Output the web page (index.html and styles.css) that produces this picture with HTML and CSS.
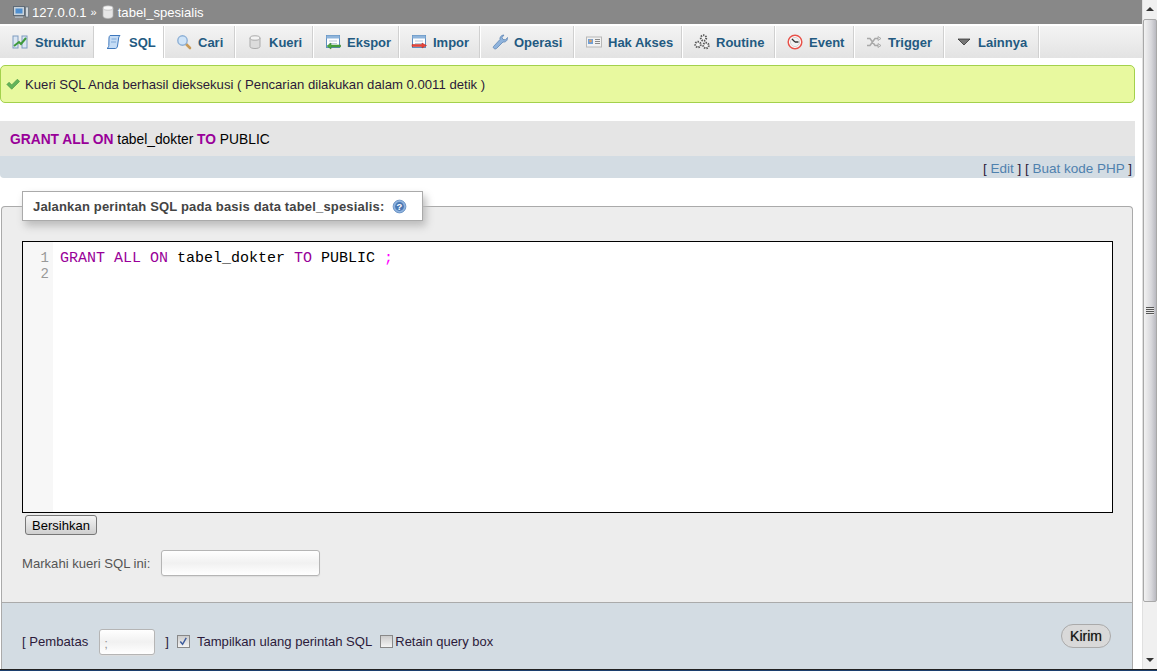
FILE: index.html
```html
<!DOCTYPE html>
<html lang="id">
<head>
<meta charset="utf-8">
<title>tabel_spesialis</title>
<link rel="stylesheet" href="styles.css">
</head>
<body>
<div class="window">
<main class="page">
  <div class="crumbs">
    <svg class="ico16" viewBox="0 0 16 16"><rect x=".5" y="2.500" width="11" height="9" fill="#c9d2da" stroke="#5f6b77"/><rect x="2.500" y="4.500" width="7" height="5" fill="#4f8fd0"/><rect x="2" y="12.500" width="8" height="1.500" fill="#aab4bd"/><rect x="12.500" y="3" width="3" height="10" fill="#cfd5da" stroke="#5f6b77" stroke-width=".7"/></svg>
    <span class="crumb">127.0.0.1</span>
    <span class="crumb-sep">»</span>
    <svg class="ico-db" viewBox="0 0 12 14"><path d="M1 3v8c0 1.500 2.200 2.500 5 2.500s5-1 5-2.500V3z" fill="#e6e6e6" stroke="#b5b5b5" stroke-width=".7"/><ellipse cx="6" cy="3" rx="5" ry="2.200" fill="#f7f7f7" stroke="#b5b5b5" stroke-width=".7"/></svg>
    <span class="crumb">tabel_spesialis</span>
  </div>
  <nav class="tabs">
    <a class="tab"><svg class="ico16" viewBox="0 0 16 16"><rect x="1" y="2" width="5" height="12" fill="#dbe6f3" stroke="#7e9cc0"/><rect x="10" y="2" width="5" height="12" fill="#dbe6f3" stroke="#7e9cc0"/><path d="M2 12l5-4 2 2 5-6" fill="none" stroke="#3e9a3a" stroke-width="2"/></svg>Struktur</a>
    <a class="tab tab-on"><svg class="ico16" viewBox="0 0 16 16"><path d="M4 1.500h10c-1 1-1.500 2-1.500 3.500l-1 7c-.3 1.500-1 2.500-2 2.500H1c1-.7 1.600-1.500 1.800-3L3 4c.1-1.300.4-2 1-2.500z" fill="#c5dcf5" stroke="#3f78bd"/><path d="M5.500 5h5M5 8h5" stroke="#7fa8d8"/></svg>SQL</a>
    <a class="tab"><svg class="ico16" viewBox="0 0 16 16"><path d="M9.500 9.500l4.500 4.500" stroke="#c89a58" stroke-width="2.600" stroke-linecap="round"/><circle cx="6.500" cy="6.500" r="4.700" fill="#cfe4f8" stroke="#8db0d6" stroke-width="1.400"/></svg>Cari</a>
    <a class="tab"><svg class="ico16" viewBox="0 0 16 16"><path d="M3 4v8.500c0 1.200 2.200 2 5 2s5-.8 5-2V4z" fill="#dcdcdc" stroke="#ababab"/><ellipse cx="8" cy="4" rx="5" ry="2.200" fill="#f4f4f4" stroke="#ababab"/></svg>Kueri</a>
    <a class="tab"><svg class="ico16" viewBox="0 0 16 16"><rect x="1.500" y="1.500" width="13" height="12" fill="#fff" stroke="#5f8fbf"/><rect x="1.500" y="1.500" width="13" height="3" fill="#8fb5dc"/><path d="M4 7h8M4 9.500h8" stroke="#b9c9da"/><path d="M15.500 11H6V9l-4 3 4 3v-2h9.500z" fill="#4aa83f" stroke="#2f7a2a" stroke-width=".5"/></svg>Ekspor</a>
    <a class="tab"><svg class="ico16" viewBox="0 0 16 16"><rect x="1.500" y="1.500" width="13" height="12" fill="#fff" stroke="#5f8fbf"/><rect x="1.500" y="1.500" width="13" height="3" fill="#8fb5dc"/><path d="M4 7h8M4 9.500h8" stroke="#b9c9da"/><path d="M1 10.500h10V9l4.500 2.500L11 14v-1.500H1z" fill="#e8443a" stroke="#b5261f" stroke-width=".5"/></svg>Impor</a>
    <a class="tab"><svg class="ico16" viewBox="0 0 16 16"><path d="M1.500 12.500L8 5.500c-.5-2 1-4.500 4-4.500l-2 2.500 1 2 2.500.3L15.500 3.500c.3 3-2 5-4.500 4.500L4.500 14.500c-1.500 1.200-4-.5-3-2z" fill="#8fb3dc" stroke="#5f86b5" stroke-width=".8"/></svg>Operasi</a>
    <a class="tab"><svg class="ico16" viewBox="0 0 16 16"><rect x=".5" y="3" width="15" height="10" fill="#f2f2f2" stroke="#b8b8b8"/><rect x="2" y="5" width="5" height="5" fill="#6fa0d8"/><circle cx="4.500" cy="7" r="1.400" fill="#e0a060"/><path d="M9 5.500h5M9 7.500h5M9 9.500h5" stroke="#8a8a8a"/></svg>Hak Akses</a>
    <a class="tab"><svg class="ico16" viewBox="0 0 16 16"><g fill="none" stroke="#555"><circle cx="9.500" cy="4" r="2.600" stroke-width="2.200" stroke-dasharray="1.300 1"/><circle cx="4" cy="10.500" r="2.600" stroke-width="2.200" stroke-dasharray="1.300 1"/><circle cx="12" cy="11.500" r="2.600" stroke-width="2.200" stroke-dasharray="1.300 1"/></g><g fill="#f4f4f4"><circle cx="9.500" cy="4" r="1.800"/><circle cx="4" cy="10.500" r="1.800"/><circle cx="12" cy="11.500" r="1.800"/></g></svg>Routine</a>
    <a class="tab"><svg class="ico16" viewBox="0 0 16 16"><circle cx="8" cy="8" r="6.800" fill="#fff" stroke="#e8524a" stroke-width="1.500"/><circle cx="8" cy="8" r="4.600" fill="#f2f2f2" stroke="#bbb" stroke-width=".6"/><path d="M8 8L5 5M8 8h3.500" stroke="#333" stroke-width="1.300"/></svg>Event</a>
    <a class="tab"><svg class="ico16" viewBox="0 0 16 16"><path d="M1 4.500h3l5 7h3M1 11.500h3l5-7h3" fill="none" stroke="#a8a8a8" stroke-width="1.500"/><path d="M12 2.500l3 2-3 2zM12 9.500l3 2-3 2z" fill="#e4e4e4" stroke="#999" stroke-width=".7"/></svg>Trigger</a>
    <a class="tab"><svg class="ico16" viewBox="0 0 16 16"><path d="M2 5h12L8 11z" fill="#777" stroke="#222" stroke-width=".7"/></svg>Lainnya</a>
  </nav>

  <div class="success"><svg class="check" viewBox="0 0 16 16"><path d="M1 8.500l2.500-2.500 3 3L13 2.500 15.500 5l-9 9z" fill="#63b35a" stroke="#3f8f3a" stroke-width=".7"/></svg>Kueri SQL Anda berhasil dieksekusi ( Pencarian dilakukan dalam 0.0011 detik )</div>

  <section class="result">
    <div class="result-sql"><b class="kw">GRANT ALL ON</b> tabel_dokter <b class="kw">TO</b> PUBLIC</div>
    <div class="result-links">[ <a>Edit</a> ] [ <a>Buat kode PHP</a> ]</div>
  </section>

  <form class="panel">
    <div class="legend">Jalankan perintah SQL pada basis data tabel_spesialis:<svg class="help" viewBox="0 0 16 16"><circle cx="8" cy="8" r="6.800" fill="#8fb3de" stroke="#6a92c4"/><circle cx="8" cy="8" r="4.700" fill="#4a78b4"/><text x="8" y="11.300" class="help-q">?</text></svg></div>
    <div class="panel-body">
      <div class="editor">
        <div class="gutter"><div>1</div><div>2</div></div>
        <div class="code"><span class="kw2">GRANT ALL ON</span> tabel_dokter <span class="kw2">TO</span> PUBLIC <span class="semi">;</span></div>
      </div>
      <button type="button" class="clear">Bersihkan</button>
      <label class="bookmark">Markahi kueri SQL ini:<span class="field field-wide"></span></label>
    </div>
    <div class="panel-foot">
      <span class="opt">[ Pembatas</span>
      <span class="field field-delim">;</span>
      <span class="opt">]</span>
      <span class="box box-on"><svg viewBox="0 0 12 12"><path d="M2.500 6l2.500 3 4-7" fill="none" stroke="#3d5c9c" stroke-width="1.600"/></svg></span>
      <span class="opt opt-show">Tampilkan ulang perintah SQL</span>
      <span class="box box-off"></span>
      <span class="opt opt-retain">Retain query box</span>
      <button type="button" class="send">Kirim</button>
    </div>
  </form>
</main>
<aside class="scrollbar">
  <div class="arrow arrow-up"></div>
  <div class="thumb"><div class="grip"></div></div>
  <div class="arrow arrow-down"></div>
</aside>
</div>
<div class="taskbar"></div>
</body>
</html>
```
FILE: styles.css
```css
* { box-sizing: border-box; }
html, body { height: 100%; margin: 0; overflow: hidden; }
body {
  display: flex;
  flex-direction: column;
  background: #fff;
  color: #2b1a3a;
  font-family: "Liberation Sans", Arial, sans-serif;
  font-size: 13.1px;
}
.window { display: flex; height: 669px; overflow: hidden; }
.page { width: 1142px; flex: none; overflow: hidden; }
.taskbar { height: 2px; background: #1c3f6e; border-top: 1px solid #222; }

.crumbs {
  display: flex;
  align-items: center;
  height: 24px;
  padding-left: 13px;
  background: #888;
  color: #fff;
}
.crumbs .ico16 { margin-right: 3px; }
.crumb-sep { margin: 0 5px 0 4px; font-size: 11px; }
.ico-db { width: 12px; height: 14px; margin-right: 4px; }

.tabs {
  display: grid;
  grid-template-columns: 94px 70px 71px 78px 86px 81px 94px 108px 93px 79px 90px 95px;
  height: 33px;
  margin-top: 1px;
  border-top: 1px solid #fff;
  background: linear-gradient(#f4f4f4, #e3e3e3);
}
.tab {
  display: flex;
  align-items: center;
  gap: 6px;
  padding-left: 12px;
  border-right: 1px solid #d0d0d0;
  box-shadow: 1px 0 0 #fff;
  color: #235a81;
  font-size: 13px;
  font-weight: bold;
  white-space: nowrap;
}
.tab:nth-child(-n+2) { gap: 7px; }
.tab-on { background: #fff; }
.ico16 { width: 16px; height: 16px; flex: none; }

.success {
  display: flex;
  align-items: center;
  height: 38px;
  margin: 7px 7px 0 0;
  padding-left: 5px;
  background: #e8f99f;
  border: 1px solid #a3d14c;
  border-radius: 5px;
  font-size: 13.15px;
}
.check { width: 14px; height: 14px; margin-right: 5px; }

.result { margin: 18px 7px 0 0; }
.result-sql {
  height: 35px;
  padding-left: 10px;
  background: #e5e5e5;
  color: #000;
  font-size: 13.8px;
  line-height: 37px;
}
.kw { color: #909; }
.result-links {
  height: 22px;
  padding-right: 3px;
  background: #d3dce3;
  border-radius: 0 0 4px 4px;
  font-size: 13.5px;
  line-height: 26px;
  text-align: right;
}
.result-links a { color: #4f81ae; }

.panel {
  position: relative;
  height: 470px;
  margin: 28px 9px 0 1px;
  background: #ededed;
  border: 1px solid #aaa;
  border-bottom: 0;
  border-radius: 4px 4px 0 0;
}
.legend {
  position: absolute;
  top: -16px;
  left: 20px;
  display: flex;
  align-items: center;
  width: 401px;
  height: 30px;
  padding-left: 10px;
  background: #fff;
  border: 1px solid #aaa;
  box-shadow: 3px 5px 8px #bbb;
  color: #444;
  font-size: 13px;
  font-weight: bold;
  letter-spacing: .17px;
}
.help { width: 15px; height: 15px; margin-left: 8px; }
.help-q { fill: #fff; font-size: 10px; font-weight: bold; text-anchor: middle; }

.panel-body { height: 395px; padding: 34px 19px 0 20px; }
.editor {
  display: flex;
  height: 272px;
  background: #fff;
  border: 1px solid #000;
}
.gutter {
  width: 30px;
  padding: 8px 4px 0 0;
  background: #f7f7f7;
  color: #999;
  font: 14px/16px "Liberation Mono", monospace;
  text-align: right;
}
.code {
  padding: 9px 0 0 7px;
  color: #000;
  font: 15px/16px "Liberation Mono", monospace;
}
.kw2 { color: #909; }
.semi { color: #f0f; }

.clear {
  display: block;
  width: 72px;
  height: 20px;
  margin: 2px 0 0 3px;
  padding: 0;
  background: linear-gradient(#f4f4f4, #cfcfcf);
  border: 1px solid #777;
  border-radius: 3px;
  color: #000;
  font: 13px "Liberation Sans", sans-serif;
}
.bookmark {
  display: flex;
  align-items: center;
  gap: 11px;
  margin-top: 15px;
  color: #555;
}
.field {
  display: block;
  height: 26px;
  background: linear-gradient(#fff, #f1f1f1 50%, #fff);
  border: 1px solid #b5b5b5;
  border-radius: 3px;
  box-shadow: 0 1px 1px #ddd;
}
.field-wide { width: 159px; }

.panel-foot {
  display: flex;
  align-items: center;
  height: 75px;
  padding: 3px 21px 0 20px;
  background: #d3dce3;
  border-top: 1px solid #aaa;
}
.field-delim {
  width: 56px;
  margin: 0 10px 0 11px;
  padding-left: 4px;
  color: #999;
  line-height: 28px;
}
.box {
  width: 13px;
  height: 13px;
  background: linear-gradient(#ccc, #f4f4f4);
  border: 1px solid #888;
}
.box svg { display: block; width: 11px; height: 11px; }
.box-on { margin: 0 7px 0 8px; }
.box-off { margin: 0 2px 0 8px; }
.opt-retain { font-size: 12.95px; }
.send {
  width: 50px;
  height: 24px;
  margin: -11px 0 0 auto;
  padding: 0;
  background: #d9d9d9;
  border: 1px solid #aaa;
  border-radius: 12px;
  color: #111;
  font: 14px "Liberation Sans", sans-serif;
  text-shadow: 0 0 1px #777;
}

.scrollbar {
  display: flex;
  flex-direction: column;
  width: 15px;
  background: #f0f0f0;
  border-left: 1px solid #e0e0e0;
}
.arrow { position: relative; flex: none; height: 19px; }
.arrow::after {
  content: "";
  position: absolute;
  left: 3px;
  border: 4px solid transparent;
}
.arrow-up::after { top: 3px; border-bottom-color: #333; }
.arrow-down { margin-top: auto; }
.arrow-down::after { bottom: 3px; border-top-color: #333; }
.thumb {
  display: flex;
  align-items: center;
  justify-content: center;
  height: 583px;
  background: linear-gradient(90deg, #f2f2f2, #d8d8dc 60%, #b9b9c0);
  border: 1px solid #a8a8a8;
  border-radius: 2px;
}
.grip {
  width: 8px;
  height: 8px;
  background: repeating-linear-gradient(#555 0 1px, #e8e8e8 1px 2px);
}
```
